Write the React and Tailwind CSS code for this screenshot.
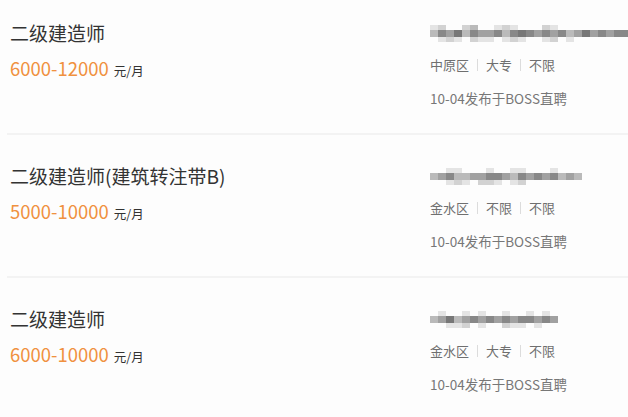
const jobs = [
  {
    title: '二级建造师',
    salary: '6000-12000',
    tags: ['中原区', '大专', '不限'],
    date: '10-04发布于BOSS直聘',
    mosaic: { width: 'w-[204px]', top: '1200230012100021', mid: '3546354453565454534645455', bot: '0121021101210012010' },
  },
  {
    title: '二级建造师(建筑转注带B)',
    salary: '5000-10000',
    tags: ['金水区', '不限', '不限'],
    date: '10-04发布于BOSS直聘',
    mosaic: { width: 'w-[186px]', top: '0011000100110001000', mid: '3453344554354545343', bot: '0012102210120000' },
  },
  {
    title: '二级建造师',
    salary: '6000-10000',
    tags: ['金水区', '大专', '不限'],
    date: '10-04发布于BOSS直聘',
    mosaic: { width: 'w-[168px]', top: '0100101001001010', mid: '3463454545455454', bot: '0011201002110100' },
  },
];

const shade = ['opacity-0', 'opacity-15', 'opacity-25', 'opacity-40', 'opacity-55', 'opacity-70', 'opacity-80'];

const MosaicRow = ({ pattern, h }) => (
  <div className={`flex ${h}`}>
    {pattern.split('').map((d, i) => (
      <div key={i} className={`w-[8px] shrink-0 bg-[#555] ${shade[Number(d)]}`} />
    ))}
  </div>
);

const Mosaic = ({ mosaic }) => (
  <div className="h-[28px] flex items-center overflow-hidden">
    <div className={`${mosaic.width} shrink-0 flex flex-col blur-[0.6px]`}>
      <MosaicRow pattern={mosaic.top} h="h-[5px]" />
      <MosaicRow pattern={mosaic.mid} h="h-[7px]" />
      <MosaicRow pattern={mosaic.bot} h="h-[5px]" />
    </div>
  </div>
);

const JobItem = ({ job }) => (
  <div className="pt-[27px] first:pt-[19px] pb-[25px] flex border-b-2 border-[#f3f3f3] ml-[7px]">
    {/* Left: title + salary */}
    <div className="flex-1 pl-[3px]">
      <div className="h-[28px] leading-[28px] text-[19px] text-[#333]">{job.title}</div>
      <div className="mt-[9px] h-[24px] leading-[24px] flex items-baseline">
        <span className="text-[18.5px] text-[#f0913f]">{job.salary}</span>
        <span className="ml-[5px] text-[12.5px] text-[#333]">元/月</span>
      </div>
    </div>

    {/* Right: company, tags, source */}
    <div className="w-[198px] shrink-0 overflow-hidden">
      <Mosaic mosaic={job.mosaic} />
      <div className="mt-[8px] h-[20px] leading-[20px] flex items-center text-[13px] text-[#6f6f6f]">
        {job.tags.map((t, i) => (
          <span key={i} className="flex items-center">
            {i > 0 && <span className="mx-[8px] h-[12px] w-px bg-[#dcdcdc]" />}
            {t}
          </span>
        ))}
      </div>
      <div className="mt-[13px] h-[20px] leading-[20px] text-[13.5px] text-[#777]">{job.date}</div>
    </div>
  </div>
);

export default function App() {
  return (
    <div
      className="w-[628px] h-[417px] overflow-hidden bg-[#fdfdfd]"
      style={{ fontFamily: '"Noto Sans CJK SC", "Noto Sans", sans-serif' }}
    >
      {jobs.map((job, i) => (
        <JobItem key={i} job={job} />
      ))}
    </div>
  );
}
